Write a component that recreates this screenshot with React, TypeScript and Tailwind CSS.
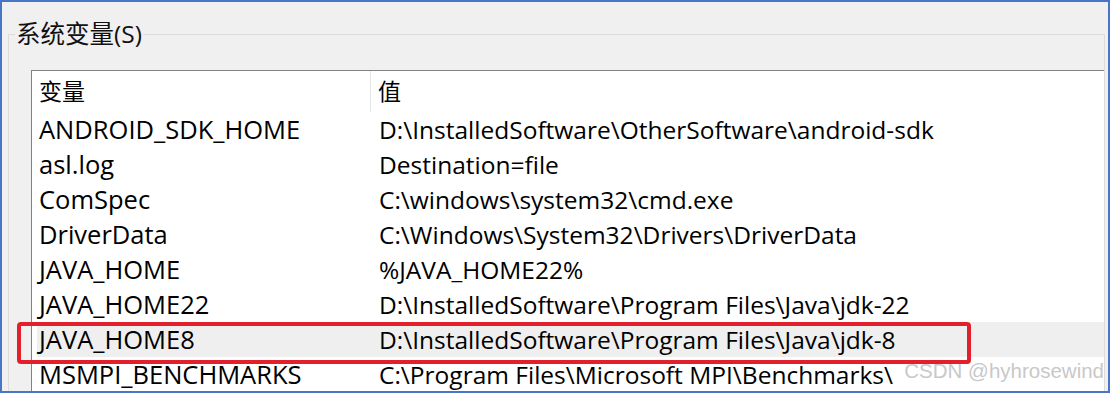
const rows: { name: string; value: string; selected?: boolean }[] = [
  { name: "ANDROID_SDK_HOME", value: "D:\\InstalledSoftware\\OtherSoftware\\android-sdk" },
  { name: "asl.log", value: "Destination=file" },
  { name: "ComSpec", value: "C:\\windows\\system32\\cmd.exe" },
  { name: "DriverData", value: "C:\\Windows\\System32\\Drivers\\DriverData" },
  { name: "JAVA_HOME", value: "%JAVA_HOME22%" },
  { name: "JAVA_HOME22", value: "D:\\InstalledSoftware\\Program Files\\Java\\jdk-22" },
  { name: "JAVA_HOME8", value: "D:\\InstalledSoftware\\Program Files\\Java\\jdk-8", selected: true },
  { name: "MSMPI_BENCHMARKS", value: "C:\\Program Files\\Microsoft MPI\\Benchmarks\\" },
];

const font = "font-['Open_Sans','Noto_Sans_CJK_SC',sans-serif]";

export default function App() {
  return (
    <div
      className={`relative w-[1110px] h-[393px] overflow-hidden border-2 border-[#4a75c6] bg-[#f0f0f0] text-black ${font}`}
    >
      <fieldset className="mt-[17px] ml-[6px] mr-[3px] h-[400px] border border-[#dcdcdc] border-b-0">
        <legend className="ml-[6px] px-[1px] text-[24.5px] leading-[30px] text-[#111]">
          系统变量(S)
        </legend>

        <div className="mt-[21px] ml-[22px] h-[340px] border-t border-l border-[#828282] bg-white">
          {/* header */}
          <div className="flex h-[41px] items-center text-[23px]">
            <div className="w-[339px] h-full flex items-center border-r border-[#e5e5e5] pl-[7px]">变量</div>
            <div className="pl-[7px]">值</div>
          </div>

          {rows.map((r) => (
            <div
              key={r.name}
              className={`ml-[5px] flex h-[35px] items-center ${r.selected ? "bg-[#efefef]" : ""}`}
            >
              <div className="w-[334px] pl-[2px] whitespace-nowrap text-[25.5px] leading-[33px]">{r.name}</div>
              <div className="pl-[8px] whitespace-nowrap text-[24.5px] leading-[33px]">{r.value}</div>
            </div>
          ))}
        </div>
      </fieldset>

      {/* red highlight frame */}
      <div className="absolute left-[15px] top-[320px] w-[954px] h-[42px] rounded-[4px] border-4 border-[#e2202b]" />

      {/* watermark */}
      <div className="absolute right-[4px] bottom-[4px] text-[20.5px] text-[#c8c8c8] font-['Liberation_Sans',sans-serif]">
        CSDN @hyhrosewind
      </div>
    </div>
  );
}
